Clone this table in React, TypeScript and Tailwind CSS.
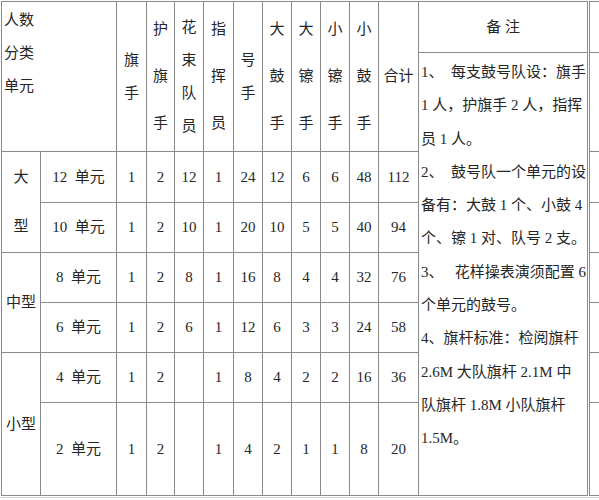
const cell = "border border-[#8a8a8a] p-0 font-normal";

const rows = [
  { unit: "12  单元", v: ["1", "2", "12", "1", "24", "12", "6", "6", "48", "112"] },
  { unit: "10  单元", v: ["1", "2", "10", "1", "20", "10", "5", "5", "40", "94"] },
  { unit: "8  单元", v: ["1", "2", "8", "1", "16", "8", "4", "4", "32", "76"] },
  { unit: "6  单元", v: ["1", "2", "6", "1", "12", "6", "3", "3", "24", "58"] },
  { unit: "4  单元", v: ["1", "2", "", "1", "8", "4", "2", "2", "16", "36"] },
  { unit: "2  单元", v: ["1", "2", "", "1", "4", "2", "1", "1", "8", "20"] },
];

const rowHeights = ["h-[51px]", "h-[50px]", "h-[50px]", "h-[50px]", "h-[50px]", "h-[93px]"];

const notes = [
  "1、  每支鼓号队设：旗手",
  "1 人，护旗手 2 人，指挥",
  "员 1 人。",
  "2、  鼓号队一个单元的设",
  "备有：大鼓 1 个、小鼓 4",
  "个、镲 1 对、队号 2 支。",
  "3、   花样操表演须配置 6",
  "个单元的鼓号。",
  "4、旗杆标准：检阅旗杆",
  "2.6M 大队旗杆 2.1M 中",
  "队旗杆 1.8M 小队旗杆",
  "1.5M。",
];

function VHead({ text, lh }: { text: string; lh: string }) {
  return (
    <td rowSpan={2} className={`${cell} align-middle`}>
      <div className={`flex flex-col items-center ${lh}`}>
        {text.split("").map((c, i) => (
          <span key={i}>{c}</span>
        ))}
      </div>
    </td>
  );
}

function TypeCell({ rowSpan, children }: { rowSpan: number; children: React.ReactNode }) {
  return (
    <td rowSpan={rowSpan} className={`${cell} text-center align-middle`}>
      {children}
    </td>
  );
}

export default function App() {
  return (
    <div className="w-[599px] h-[500px] overflow-hidden bg-white pl-px pt-px text-[#262626] text-[15px] font-['Liberation_Serif','Noto_Sans_CJK_SC',serif]">
      <table className="table-fixed border-collapse w-[598px]">
        <colgroup>
          <col className="w-[39px]" />
          <col className="w-[76px]" />
          <col className="w-[30px]" />
          <col className="w-[28px]" />
          <col className="w-[29px]" />
          <col className="w-[30px]" />
          <col className="w-[29px]" />
          <col className="w-[29px]" />
          <col className="w-[29px]" />
          <col className="w-[29px]" />
          <col className="w-[29px]" />
          <col className="w-[40px]" />
          <col className="w-[170px]" />
          <col className="w-[11px]" />
        </colgroup>
        <tbody>
          <tr className="h-[51px]">
            <td rowSpan={2} colSpan={2} className={`${cell} align-top text-left`}>
              <div className="flex flex-col leading-[33px] pl-[2px] pt-[2px]">
                <span>人数</span>
                <span>分类</span>
                <span>单元</span>
              </div>
            </td>
            <VHead text="旗手" lh="leading-[33px]" />
            <VHead text="护旗手" lh="leading-[47px]" />
            <VHead text="花束队员" lh="leading-[33px]" />
            <VHead text="指挥员" lh="leading-[47px]" />
            <VHead text="号手" lh="leading-[33px]" />
            <VHead text="大鼓手" lh="leading-[47px]" />
            <VHead text="大镲手" lh="leading-[47px]" />
            <VHead text="小镲手" lh="leading-[47px]" />
            <VHead text="小鼓手" lh="leading-[47px]" />
            <td rowSpan={2} className={`${cell} align-middle text-center`}>
              合计
            </td>
            <td className={`${cell} border-double border-r-[3px] align-middle text-center whitespace-pre`}>
              备 注
            </td>
            <td className={cell} />
          </tr>
          <tr className="h-[99px]">
            <td rowSpan={7} className={`${cell} border-double border-r-[3px] align-top`}>
              <div className="flex flex-col pl-[2px] pt-[3px] leading-[33.3px]">
                {notes.map((n, i) => (
                  <span key={i} className="whitespace-pre">
                    {n}
                  </span>
                ))}
              </div>
            </td>
            <td className={cell} />
          </tr>
          {rows.map((r, i) => (
            <tr key={r.unit} className={rowHeights[i]}>
              {i === 0 && (
                <TypeCell rowSpan={2}>
                  <div className="flex flex-col items-center leading-[49px]">
                    <span>大</span>
                    <span>型</span>
                  </div>
                </TypeCell>
              )}
              {i === 2 && <TypeCell rowSpan={2}>中型</TypeCell>}
              {i === 4 && <TypeCell rowSpan={2}>小型</TypeCell>}
              <td className={`${cell} text-center align-middle whitespace-pre`}>{r.unit}</td>
              {r.v.map((v, j) => (
                <td key={j} className={`${cell} text-center align-middle`}>
                  {v}
                </td>
              ))}
              <td className={cell} />
            </tr>
          ))}
        </tbody>
      </table>
      <div className="mt-px h-px w-full bg-[#cfcfcf]" />
    </div>
  );
}
